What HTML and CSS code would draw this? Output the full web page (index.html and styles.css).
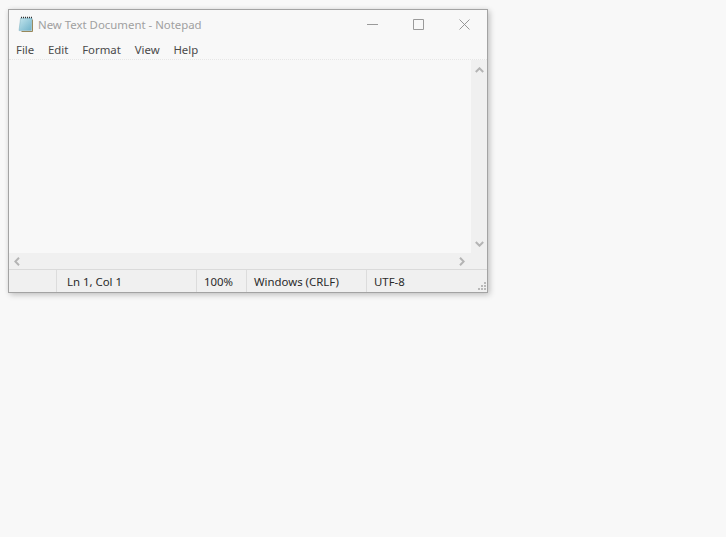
FILE: index.html
```html
<!DOCTYPE html>
<html lang="en">
<head>
<meta charset="utf-8">
<title>New Text Document - Notepad</title>
<link rel="stylesheet" href="styles.css">
</head>
<body>
<div class="window">
  <div class="titlebar">
    <svg class="app-icon" width="16" height="17" viewBox="0 0 16 17">
      <defs>
        <linearGradient id="page" x1="0" y1="0" x2="1" y2="1">
          <stop offset="0" stop-color="#c4e6ee"/>
          <stop offset="1" stop-color="#6fb2c9"/>
        </linearGradient>
      </defs>
      <path d="M14.5 3.5V15.5H3.5" fill="none" stroke="#9a8757" stroke-width="1"/>
      <path d="M2.6 2H14L13.4 14.6H1Z" fill="url(#page)" stroke="#7fb0c0" stroke-width=".5"/>
      <path d="M3 1.5H14" stroke="#333" stroke-width="1.3" stroke-dasharray="1 1"/>
    </svg>
    <span class="title">New Text Document - Notepad</span>
    <div class="controls">
      <button class="ctl"><svg width="11" height="11" viewBox="0 0 11 11"><path d="M0 5.5H11" stroke="#9a9a9a"/></svg></button>
      <button class="ctl"><svg width="11" height="11" viewBox="0 0 11 11"><path d="M.5.5H10.5V10.5H.5Z" fill="none" stroke="#9a9a9a"/></svg></button>
      <button class="ctl"><svg width="11" height="11" viewBox="0 0 11 11"><path d="M.5.5 10.5 10.5M10.5.5.5 10.5" stroke="#8c8c8c" stroke-width=".9"/></svg></button>
    </div>
  </div>
  <nav class="menu">
    <span class="menu-item">File</span>
    <span class="menu-item">Edit</span>
    <span class="menu-item">Format</span>
    <span class="menu-item">View</span>
    <span class="menu-item">Help</span>
  </nav>
  <div class="content">
    <div class="editor"></div>
    <div class="vscroll">
      <svg width="9" height="6" viewBox="0 0 9 6"><path d="M.8 5 4.5 1.3 8.2 5" fill="none" stroke="#b4b4b4" stroke-width="2"/></svg>
      <svg width="9" height="6" viewBox="0 0 9 6"><path d="M.8 1 4.5 4.7 8.2 1" fill="none" stroke="#b4b4b4" stroke-width="2"/></svg>
    </div>
  </div>
  <div class="hscroll">
    <svg width="6" height="9" viewBox="0 0 6 9"><path d="M5 .8 1.3 4.5 5 8.2" fill="none" stroke="#b4b4b4" stroke-width="2"/></svg>
    <svg width="6" height="9" viewBox="0 0 6 9"><path d="M1 .8 4.7 4.5 1 8.2" fill="none" stroke="#b4b4b4" stroke-width="2"/></svg>
  </div>
  <footer class="status">
    <div class="cell cell-blank"></div>
    <div class="cell cell-pos">Ln 1, Col 1</div>
    <div class="cell cell-zoom">100%</div>
    <div class="cell cell-eol">Windows (CRLF)</div>
    <div class="cell cell-enc">UTF-8</div>
    <svg class="grip" width="10" height="10" viewBox="0 0 10 10">
      <path d="M7 1h2v2H7ZM4 4h2v2H4ZM7 4h2v2H7ZM1 7h2v2H1ZM4 7h2v2H4ZM7 7h2v2H7Z" fill="#b9b9b9"/>
    </svg>
  </footer>
</div>
</body>
</html>
```

FILE: styles.css
```css
* { box-sizing: border-box; }
html, body { height: 100%; }
body {
  margin: 0;
  padding: 9px 0 0 8px;
  background: #f8f8f8;
  font-family: "Noto Sans", "Open Sans", sans-serif;
  font-size: 11.4px;
  color: #222;
  overflow: hidden;
}
.window {
  width: 480px;
  height: 284px;
  display: flex;
  flex-direction: column;
  background: #f8f8f8;
  border: 1px solid #a3a3a3;
  box-shadow: 2px 2px 6px rgba(0, 0, 0, .2), 0 0 5px rgba(0, 0, 0, .06);
}
.titlebar {
  height: 28px;
  display: flex;
  align-items: center;
  padding-left: 9px;
  flex: none;
}
.app-icon { flex: none; margin-right: 4px; }
.title { color: #a0a0a0; flex: 1; }
.controls { display: flex; height: 100%; }
.ctl {
  width: 46px;
  height: 100%;
  padding: 0;
  border: 0;
  background: none;
  display: flex;
  align-items: center;
  justify-content: center;
}
.menu {
  height: 22px;
  flex: none;
  display: flex;
  align-items: center;
  padding: 2px 0 0 7px;
  gap: 13.8px;
  color: #4a4a4a;
  border-bottom: 1px dotted #e6e6e6;
}
.content { flex: 1; display: flex; min-height: 0; }
.editor { flex: 1; background: #f8f8f8; }
.vscroll {
  width: 16px;
  flex: none;
  background: #f0f0f0;
  display: flex;
  flex-direction: column;
  justify-content: space-between;
  align-items: center;
  padding: 7px 0 6px;
}
.hscroll {
  height: 16px;
  flex: none;
  background: #f0f0f0;
  display: flex;
  justify-content: space-between;
  align-items: center;
  padding: 0 22px 0 5px;
}
.status {
  height: 23px;
  flex: none;
  display: flex;
  position: relative;
  background: #f0f0f0;
  border-top: 1px solid #dadada;
  color: #2a2a2a;
}
.cell {
  height: 100%;
  display: flex;
  align-items: center;
  border-left: 1px solid #dcdcdc;
  padding-left: 7px;
}
.cell-blank { width: 47px; border-left: 0; }
.cell-pos { width: 140px; padding-left: 10px; }
.cell-zoom { width: 50px; }
.cell-eol { width: 120px; }
.cell-enc { flex: 1; }
.grip { position: absolute; right: 0; bottom: 1px; }
```
